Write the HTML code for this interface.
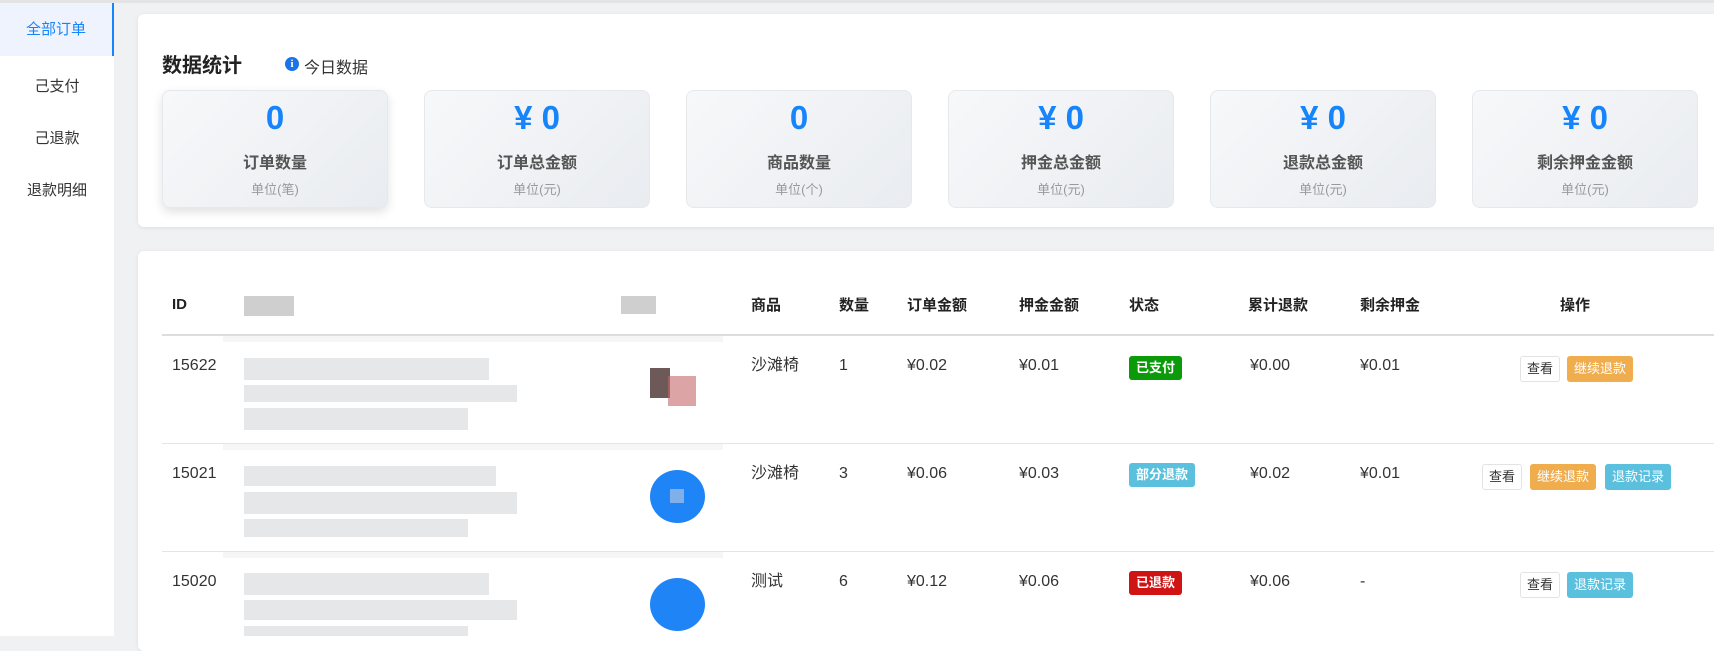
<!DOCTYPE html>
<html><head><meta charset="utf-8"><style>
*{margin:0;padding:0;box-sizing:border-box}
body{width:1714px;height:636px;overflow:hidden;background:#f0f1f3;font-family:"Liberation Sans","Noto Sans CJK SC",sans-serif;position:relative;color:#333}
.a{position:absolute}
.side{left:0;top:0;width:114px;height:636px;background:#fff;border-top:3px solid #e4e4e4}
.side div{position:absolute;left:0;width:114px;text-align:center;font-size:15px;color:#333}
.card{background:#fff;border-radius:6px;box-shadow:0 1px 4px rgba(0,0,0,.08)}
.st{width:226px;height:118px;top:90px;border-radius:8px;border:1px solid #e6e8eb;background:linear-gradient(135deg,#f7f8fa,#e9ecf0);text-align:center}
.st .n{font-size:33px;font-weight:bold;color:#1684fb;margin-top:8px;height:42px}
.st .l{font-size:16px;font-weight:bold;color:#555;margin-top:8px}
.st .u{font-size:13px;color:#999;margin-top:6px}
.th{font-size:15px;font-weight:bold;color:#222;top:296px;line-height:20px}
.td{font-size:16px;color:#333;line-height:20px}
.bl{background:#e6e7e9}
.tag{font-size:13px;color:#fff;font-weight:bold;border-radius:3px;height:24px;line-height:24px;padding:0 7px}
.btn{font-size:13px;border-radius:3px;height:26px;line-height:24px;padding:0 6px;border:1px solid #e3e3e3;color:#333;background:#fff}
.o{background:#f0ad4e;border-color:#f0ad4e;color:#fff}
.c{background:#5bc0de;border-color:#5bc0de;color:#fff}
.hl{height:1px;background:#e5e5e5}
</style></head><body>
<div class="a" style="left:0;top:0;width:1714px;height:3px;background:#e4e4e4"></div>
<div class="a side">
<div style="top:0;height:53px;background:#eef3fe;color:#1684fb;line-height:53px;border-right:2px solid #1684fb">全部订单</div>
<div style="top:72px">己支付</div>
<div style="top:124px">己退款</div>
<div style="top:176px">退款明细</div>
</div>
<div class="a card" style="left:138px;top:14px;width:1590px;height:213px"></div>
<div class="a" style="left:162px;top:49px;font-size:20px;font-weight:bold;color:#222">数据统计</div>
<div class="a" style="left:285px;top:57px;width:14px;height:14px;border-radius:50%;background:#1a73e8;color:#fff;font-size:11px;font-weight:bold;text-align:center;line-height:14px;font-family:'Liberation Serif',serif">i</div>
<div class="a" style="left:304px;top:54px;font-size:16px;color:#333">今日数据</div>
<div class="a st" style="left:162px;box-shadow:0 4px 10px rgba(0,0,0,.12)"><div class="n">0</div><div class="l">订单数量</div><div class="u">单位(笔)</div></div>
<div class="a st" style="left:424px"><div class="n">¥ 0</div><div class="l">订单总金额</div><div class="u">单位(元)</div></div>
<div class="a st" style="left:686px"><div class="n">0</div><div class="l">商品数量</div><div class="u">单位(个)</div></div>
<div class="a st" style="left:948px"><div class="n">¥ 0</div><div class="l">押金总金额</div><div class="u">单位(元)</div></div>
<div class="a st" style="left:1210px"><div class="n">¥ 0</div><div class="l">退款总金额</div><div class="u">单位(元)</div></div>
<div class="a st" style="left:1472px"><div class="n">¥ 0</div><div class="l">剩余押金金额</div><div class="u">单位(元)</div></div>

<div class="a card" style="left:138px;top:251px;width:1590px;height:400px"></div>
<div class="a th" style="left:172px;top:295px">ID</div>
<div class="a" style="left:244px;top:296px;width:50px;height:20px;background:#bbb;opacity:.7"></div>
<div class="a" style="left:621px;top:296px;width:35px;height:18px;background:#bbb;opacity:.7"></div>
<div class="a th" style="left:751px">商品</div>
<div class="a th" style="left:839px">数量</div>
<div class="a th" style="left:907px">订单金额</div>
<div class="a th" style="left:1019px">押金金额</div>
<div class="a th" style="left:1129px">状态</div>
<div class="a th" style="left:1248px">累计退款</div>
<div class="a th" style="left:1360px">剩余押金</div>
<div class="a th" style="left:1560px">操作</div>
<div class="a" style="left:162px;top:334px;width:1552px;height:2px;background:#ddd"></div>
<div class="a" style="left:223px;top:336px;width:500px;height:6px;background:#f6f6f6"></div>
<div class="a hl" style="left:162px;top:443px;width:1552px"></div>
<div class="a" style="left:223px;top:444px;width:500px;height:6px;background:#f6f6f6"></div>
<div class="a hl" style="left:162px;top:551px;width:1552px"></div>
<div class="a" style="left:223px;top:552px;width:500px;height:6px;background:#f6f6f6"></div>

<!-- row1 -->
<div class="a td" style="left:172px;top:356px">15622</div>
<div class="a bl" style="left:244px;top:358px;width:245px;height:22px"></div>
<div class="a bl" style="left:244px;top:385px;width:273px;height:17px"></div>
<div class="a bl" style="left:244px;top:408px;width:224px;height:22px"></div>
<div class="a" style="left:650px;top:368px;width:20px;height:30px;background:#4a3030;opacity:.8"></div>
<div class="a" style="left:668px;top:376px;width:28px;height:30px;background:#c46868;opacity:.6"></div>
<div class="a td" style="left:751px;top:356px">沙滩椅</div>
<div class="a td" style="left:839px;top:356px">1</div>
<div class="a td" style="left:907px;top:356px">¥0.02</div>
<div class="a td" style="left:1019px;top:356px">¥0.01</div>
<div class="a tag" style="left:1129px;top:356px;background:#0a9a0a">已支付</div>
<div class="a td" style="left:1250px;top:356px">¥0.00</div>
<div class="a td" style="left:1360px;top:356px">¥0.01</div>
<div class="a btn" style="left:1520px;top:356px">查看</div>
<div class="a btn o" style="left:1567px;top:356px">继续退款</div>
<!-- row2 -->
<div class="a td" style="left:172px;top:464px">15021</div>
<div class="a bl" style="left:244px;top:466px;width:252px;height:20px"></div>
<div class="a bl" style="left:244px;top:492px;width:273px;height:22px"></div>
<div class="a bl" style="left:244px;top:519px;width:224px;height:18px"></div>
<div class="a" style="left:650px;top:470px;width:55px;height:53px;border-radius:50%;background:#1f84f5"></div>
<div class="a" style="left:670px;top:489px;width:14px;height:14px;background:#7fb0ea"></div>
<div class="a td" style="left:751px;top:464px">沙滩椅</div>
<div class="a td" style="left:839px;top:464px">3</div>
<div class="a td" style="left:907px;top:464px">¥0.06</div>
<div class="a td" style="left:1019px;top:464px">¥0.03</div>
<div class="a tag" style="left:1129px;top:463px;background:#5bc0de">部分退款</div>
<div class="a td" style="left:1250px;top:464px">¥0.02</div>
<div class="a td" style="left:1360px;top:464px">¥0.01</div>
<div class="a btn" style="left:1482px;top:464px">查看</div>
<div class="a btn o" style="left:1530px;top:464px">继续退款</div>
<div class="a btn c" style="left:1605px;top:464px">退款记录</div>
<!-- row3 -->
<div class="a td" style="left:172px;top:572px">15020</div>
<div class="a bl" style="left:244px;top:573px;width:245px;height:22px"></div>
<div class="a bl" style="left:244px;top:600px;width:273px;height:20px"></div>
<div class="a bl" style="left:244px;top:626px;width:224px;height:10px"></div>
<div class="a" style="left:650px;top:578px;width:55px;height:53px;border-radius:50%;background:#1f84f5"></div>
<div class="a td" style="left:751px;top:572px">测试</div>
<div class="a td" style="left:839px;top:572px">6</div>
<div class="a td" style="left:907px;top:572px">¥0.12</div>
<div class="a td" style="left:1019px;top:572px">¥0.06</div>
<div class="a tag" style="left:1129px;top:571px;background:#d01313">已退款</div>
<div class="a td" style="left:1250px;top:572px">¥0.06</div>
<div class="a td" style="left:1360px;top:572px">-</div>
<div class="a btn" style="left:1520px;top:572px">查看</div>
<div class="a btn c" style="left:1567px;top:572px">退款记录</div>
</body></html>
